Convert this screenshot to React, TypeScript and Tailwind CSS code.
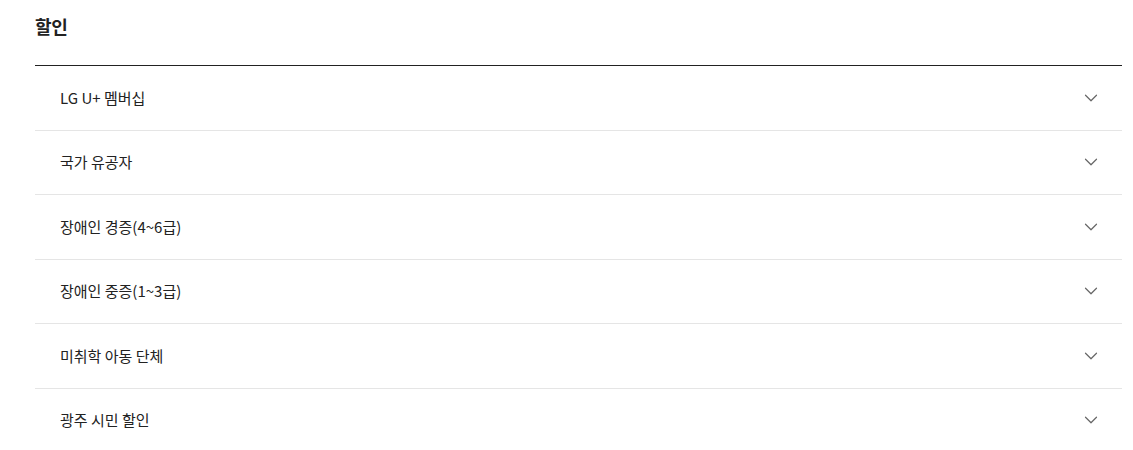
import { ChevronDown } from "lucide-react";

const items = [
  "LG U+ 멤버십",
  "국가 유공자",
  "장애인 경증(4~6급)",
  "장애인 중증(1~3급)",
  "미취학 아동 단체",
  "광주 시민 할인",
];

const App = () => {
  return (
    <div className="w-[1133px] bg-white font-['Noto_Sans_CJK_KR','Noto_Sans',sans-serif] text-[#222]">
      <section className="ml-[35px] w-[1087px]">
        <h2 className="pt-[13px] pb-[26px] text-[18px] leading-[26px] font-bold tracking-[-0.3px]">
          할인
        </h2>
        <ul className="border-t border-[#222]">
          {items.map((label) => (
            <li
              key={label}
              className="flex h-[64.5px] items-center justify-between border-b border-[#e5e5e5] pr-[20px] pl-[25px]"
            >
              <span className="text-[15px] leading-[22px] font-normal">
                {label}
              </span>
              <ChevronDown size={22} strokeWidth={1.3} className="text-[#666]" />
            </li>
          ))}
        </ul>
      </section>
    </div>
  );
};

export default App;
